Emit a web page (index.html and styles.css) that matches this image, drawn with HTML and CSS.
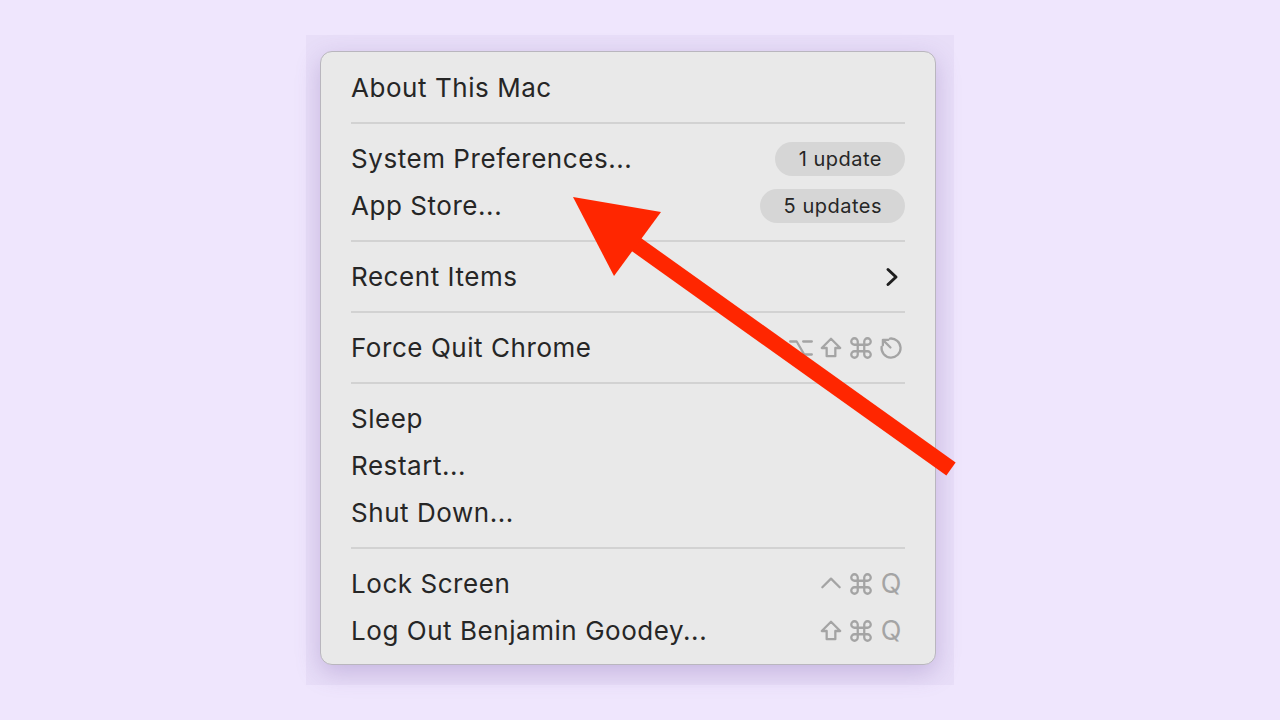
FILE: index.html
```html
<!DOCTYPE html>
<html>
<head>
<meta charset="utf-8">
<link rel="stylesheet" href="styles.css">
</head>
<body>
<div class="stage">
  <div class="shot">
    <div class="menu">
      <div class="item"><span class="label">About This Mac</span></div>
      <div class="sep"></div>
      <div class="item"><span class="label">System Preferences...</span><span class="badge">1 update</span></div>
      <div class="item"><span class="label">App Store...</span><span class="badge">5 updates</span></div>
      <div class="sep"></div>
      <div class="item"><span class="label">Recent Items</span>
        <svg class="chev" viewBox="0 0 14 20" width="14" height="20"><path d="M3 2.5 L11 10 L3 17.5" fill="none" stroke="#1e1e1e" stroke-width="3" stroke-linecap="round" stroke-linejoin="round"/></svg>
      </div>
      <div class="sep"></div>
      <div class="item"><span class="label">Force Quit Chrome</span>
        <span class="keys">
          <svg class="key" viewBox="0 0 24 24"><path d="M2 6h6l7 12h7M14 6h8"/></svg>
          <svg class="key" viewBox="0 0 24 24"><path d="M12 3.5 L3.5 12 H8 V19.5 H16 V12 H20.5 Z"/></svg>
          <svg class="key" viewBox="0 0 24 24"><path d="M15 6v12a3 3 0 1 0 3-3H6a3 3 0 1 0 3 3V6a3 3 0 1 0-3 3h12a3 3 0 1 0-3-3"/></svg>
          <svg class="key" viewBox="0 0 24 24"><path d="M11 3.3 A8.8 8.8 0 1 1 3.3 11 M11.5 11.5 L4.5 4.5 M4.5 9.5 V4.5 H9.5"/></svg>
        </span>
      </div>
      <div class="sep"></div>
      <div class="item"><span class="label">Sleep</span></div>
      <div class="item"><span class="label">Restart...</span></div>
      <div class="item"><span class="label">Shut Down...</span></div>
      <div class="sep"></div>
      <div class="item"><span class="label">Lock Screen</span>
        <span class="keys">
          <svg class="key" viewBox="0 0 24 24"><path d="M4 15 L12 7 L20 15"/></svg>
          <svg class="key" viewBox="0 0 24 24"><path d="M15 6v12a3 3 0 1 0 3-3H6a3 3 0 1 0 3 3V6a3 3 0 1 0-3 3h12a3 3 0 1 0-3-3"/></svg>
          <span class="qkey">Q</span>
        </span>
      </div>
      <div class="item"><span class="label">Log Out Benjamin Goodey...</span>
        <span class="keys">
          <svg class="key" viewBox="0 0 24 24"><path d="M12 3.5 L3.5 12 H8 V19.5 H16 V12 H20.5 Z"/></svg>
          <svg class="key" viewBox="0 0 24 24"><path d="M15 6v12a3 3 0 1 0 3-3H6a3 3 0 1 0 3 3V6a3 3 0 1 0-3 3h12a3 3 0 1 0-3-3"/></svg>
          <span class="qkey">Q</span>
        </span>
      </div>
    </div>
  </div>
  <svg class="arrow" viewBox="0 0 1280 720" width="1280" height="720">
    <line x1="630" y1="240" x2="951" y2="469" stroke="#ff2600" stroke-width="16"/>
    <polygon points="573,197 661,212 614,276" fill="#ff2600"/>
  </svg>
</div>
</body>
</html>
```
FILE: styles.css
```css
html, body {
  margin: 0;
  padding: 0;
}
body {
  background: #efe6fd;
  width: 1280px;
  height: 720px;
  overflow: hidden;
  font-family: Inter, "Noto Sans", "Liberation Sans", sans-serif;
}
.stage {
  position: relative;
  width: 1280px;
  height: 720px;
  display: flex;
  justify-content: flex-start;
  padding: 35px 0 0 306px;
  box-sizing: border-box;
}
.shot {
  width: 648px;
  height: 650px;
  background: #e8def8;
  padding: 16px 0 0 14px;
  box-sizing: border-box;
}
.menu {
  width: 616px;
  height: 614px;
  box-sizing: border-box;
  background: #e9e9e9;
  border: 1px solid #b9b6be;
  border-radius: 12px;
  padding: 12px 30px 0 30px;
  box-shadow: 0 8px 24px rgba(110, 80, 160, 0.28);
  display: flex;
  flex-direction: column;
}
.item {
  height: 47px;
  display: flex;
  align-items: center;
  justify-content: space-between;
  color: #262626;
}
.label {
  font-size: 26px;
  letter-spacing: 0.55px;
}
.sep {
  height: 24px;
  display: flex;
  align-items: center;
}
.sep::before {
  content: "";
  display: block;
  width: 100%;
  height: 2px;
  background: #d2d2d2;
}
.badge {
  background: #d6d6d6;
  border-radius: 17px;
  height: 34px;
  padding: 0 23px 0 24px;
  display: flex;
  align-items: center;
  font-size: 20px;
  letter-spacing: 0.5px;
  color: #262626;
}
.chev {
  margin-right: 6px;
}
.keys {
  display: flex;
  align-items: center;
  gap: 4px;
  margin-right: 1px;
}
.key {
  width: 26px;
  height: 26px;
  fill: none;
  stroke: #a4a4a4;
  stroke-width: 2.1;
  stroke-linejoin: round;
  stroke-linecap: round;
}
.qkey {
  font-size: 27px;
  color: #a4a4a4;
  width: 26px;
  text-align: center;
}
.arrow {
  position: absolute;
  left: 0;
  top: 0;
  pointer-events: none;
}
```
